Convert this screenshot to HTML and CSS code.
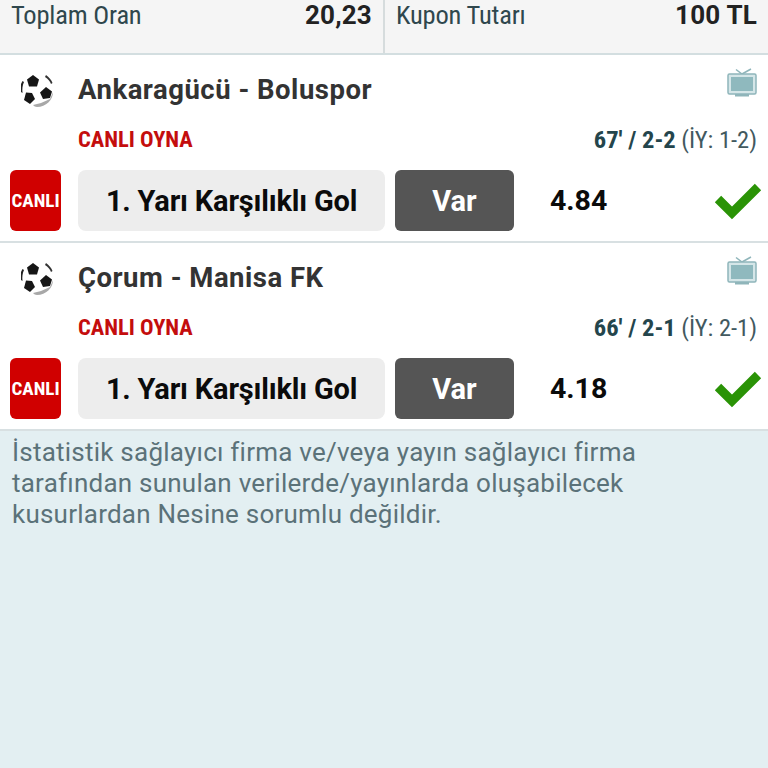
FILE: index.html
```html
<!DOCTYPE html>
<html lang="tr">
<head>
<meta charset="utf-8">
<title>Kupon</title>
<link rel="stylesheet" href="styles.css">
</head>
<body>
<div class="summary">
  <div class="sum-cell sum-left"><span class="sum-label">Toplam Oran</span><span class="sum-value">20,23</span></div>
  <div class="sum-cell sum-right"><span class="sum-label">Kupon Tutarı</span><span class="sum-value">100 TL</span></div>
</div>

<section class="card">
  <div class="row-head">
    <svg class="ball" viewBox="0 0 36 36"><circle cx="18" cy="18" r="17" fill="#fff"/><path d="M2 12 L3.500 9 L5 10 C3.500 13 3 17 3.500 21 L2 20Z" fill="#222"/><path d="M14 3 L20 7.500 L18 14.500 L10 14.500 L8 7.500Z" fill="#161616"/><path d="M27 3 C30 5 32.500 8 33.500 11 L32 12 C31 9 29 7 26 5Z" fill="#333"/><path d="M27 15 L33 19.500 L31 26 L24 27 L21 20.500Z" fill="#161616"/><path d="M7 20.500 L13 21 L16 27 L11 32 L5 28Z" fill="#161616"/><path d="M14 33 L22 31 L31 27 L34 20 C34 28 27 35 18 35 C16.500 35 15 34 14 33Z" fill="#a8a8a8"/></svg>
    <h2 class="teams">Ankaragücü - Boluspor</h2>
    <svg class="tv" viewBox="0 0 30 30"><path d="M9 1.500 L15 6 L24 1" fill="none" stroke="#8fb5ba" stroke-width="1.500"/><rect x="1" y="6" width="28" height="20" rx="1.500" fill="#d5e6e8" stroke="#8fb5ba" stroke-width="1.500"/><rect x="4" y="9" width="22" height="14" fill="#8fb9be"/><rect x="8" y="26" width="14" height="2.500" fill="#8fb5ba"/></svg>
  </div>
  <div class="row-status">
    <span class="play">CANLI OYNA</span>
    <span class="score"><b>67' / 2-2</b> (İY: 1-2)</span>
  </div>
  <div class="row-bet">
    <span class="live">CANLI</span>
    <span class="market">1. Yarı Karşılıklı Gol</span>
    <span class="pick">Var</span>
    <span class="odd">4.84</span>
    <svg class="check" viewBox="0 0 48 38"><path d="M4 17 L18 31 L44 5" fill="none" stroke="#2a9306" stroke-width="9"/></svg>
  </div>
</section>

<section class="card">
  <div class="row-head">
    <svg class="ball" viewBox="0 0 36 36"><circle cx="18" cy="18" r="17" fill="#fff"/><path d="M2 12 L3.500 9 L5 10 C3.500 13 3 17 3.500 21 L2 20Z" fill="#222"/><path d="M14 3 L20 7.500 L18 14.500 L10 14.500 L8 7.500Z" fill="#161616"/><path d="M27 3 C30 5 32.500 8 33.500 11 L32 12 C31 9 29 7 26 5Z" fill="#333"/><path d="M27 15 L33 19.500 L31 26 L24 27 L21 20.500Z" fill="#161616"/><path d="M7 20.500 L13 21 L16 27 L11 32 L5 28Z" fill="#161616"/><path d="M14 33 L22 31 L31 27 L34 20 C34 28 27 35 18 35 C16.500 35 15 34 14 33Z" fill="#a8a8a8"/></svg>
    <h2 class="teams">Çorum - Manisa FK</h2>
    <svg class="tv" viewBox="0 0 30 30"><path d="M9 1.500 L15 6 L24 1" fill="none" stroke="#8fb5ba" stroke-width="1.500"/><rect x="1" y="6" width="28" height="20" rx="1.500" fill="#d5e6e8" stroke="#8fb5ba" stroke-width="1.500"/><rect x="4" y="9" width="22" height="14" fill="#8fb9be"/><rect x="8" y="26" width="14" height="2.500" fill="#8fb5ba"/></svg>
  </div>
  <div class="row-status">
    <span class="play">CANLI OYNA</span>
    <span class="score"><b>66' / 2-1</b> (İY: 2-1)</span>
  </div>
  <div class="row-bet">
    <span class="live">CANLI</span>
    <span class="market">1. Yarı Karşılıklı Gol</span>
    <span class="pick">Var</span>
    <span class="odd">4.18</span>
    <svg class="check" viewBox="0 0 48 38"><path d="M4 17 L18 31 L44 5" fill="none" stroke="#2a9306" stroke-width="9"/></svg>
  </div>
</section>

<p class="note">İstatistik sağlayıcı firma ve/veya yayın sağlayıcı firma tarafından sunulan verilerde/yayınlarda oluşabilecek kusurlardan Nesine sorumlu değildir.</p>
</body>
</html>
```

FILE: styles.css
```css
* { box-sizing: border-box; }
html, body { height: 100%; }
body {
  margin: 0;
  background: #e3eff2;
  font-family: Roboto, "Liberation Sans", sans-serif;
  overflow: hidden;
}
.summary {
  display: flex;
  height: 55px;
  background: #f5f5f5;
  border-bottom: 2px solid #d3dee0;
}
.sum-cell {
  flex: 1;
  display: flex;
  justify-content: space-between;
  align-items: flex-start;
  line-height: 30px;
}
.sum-left { padding: 0 11px; border-right: 2px solid #d6dcdd; flex: 0 0 385px; }
.sum-right { padding: 0 11px; }
.sum-label {
  font-size: 26.500px;
  font-stretch: 75%;
  font-weight: 400;
  color: #2f474d;
  letter-spacing: -0.2px;
}
.sum-value { font-size: 26px; font-weight: 700; color: #222; letter-spacing: 0.2px; }
.card {
  height: 188px;
  background: #fff;
  border-bottom: 2px solid #d8e0e2;
  padding: 0 6px 0 10px;
  display: flex;
  flex-direction: column;
}
.row-head {
  height: 60px;
  padding-top: 6px;
  display: flex;
  align-items: center;
}
.ball { width: 36px; height: 36px; margin: 3px 0 0 9px; flex: none; }
.teams {
  margin: 0 0 0 23px;
  flex: 1;
  font-size: 27.500px;
  font-weight: 700;
  color: #333;
  padding-top: 3px;
  letter-spacing: 0.500px;
}
.tv { width: 30px; height: 30px; margin: -11px 5px 0 0; flex: none; }
.row-status {
  height: 48px;
  margin: 0 5px 7px 0;
  padding-left: 68px;
  display: flex;
  justify-content: space-between;
  align-items: center;
}
.play {
  font-size: 22.500px;
  font-stretch: 75%;
  font-weight: 700;
  color: #c40d0d;
}
.score { font-size: 24.500px; font-stretch: 75%; font-weight: 400; color: #42595f; }
.score b { color: #24454c; font-weight: 700; }
.row-bet {
  height: 61px;
  display: flex;
  align-items: center;
}
.live {
  width: 51px;
  height: 61px;
  border-radius: 6px;
  background: #d00000;
  color: #fff;
  font-size: 19px;
  font-stretch: 75%;
  font-weight: 700;
  display: flex;
  align-items: center;
  justify-content: center;
  flex: none;
}
.market {
  margin-left: 17px;
  width: 307px;
  height: 61px;
  border-radius: 8px;
  background: #ededed;
  color: #0b0b0b;
  font-size: 29px;
  font-weight: 700;
  letter-spacing: -0.200px;
  display: flex;
  align-items: center;
  justify-content: center;
  flex: none;
}
.pick {
  margin-left: 10px;
  width: 119px;
  height: 61px;
  border-radius: 6px;
  background: #555;
  color: #fff;
  font-size: 29px;
  font-weight: 700;
  display: flex;
  align-items: center;
  justify-content: center;
  flex: none;
}
.odd {
  margin-left: 36px;
  font-size: 28.500px;
  font-weight: 700;
  color: #0b0b0b;
  flex: 1;
}
.check { width: 48px; height: 38px; flex: none; }
.note {
  margin: 0;
  padding: 6px 100px 0 12px;
  font-size: 26px;
  line-height: 31px;
  letter-spacing: 0.230px;
  color: #5b7279;
}
```
